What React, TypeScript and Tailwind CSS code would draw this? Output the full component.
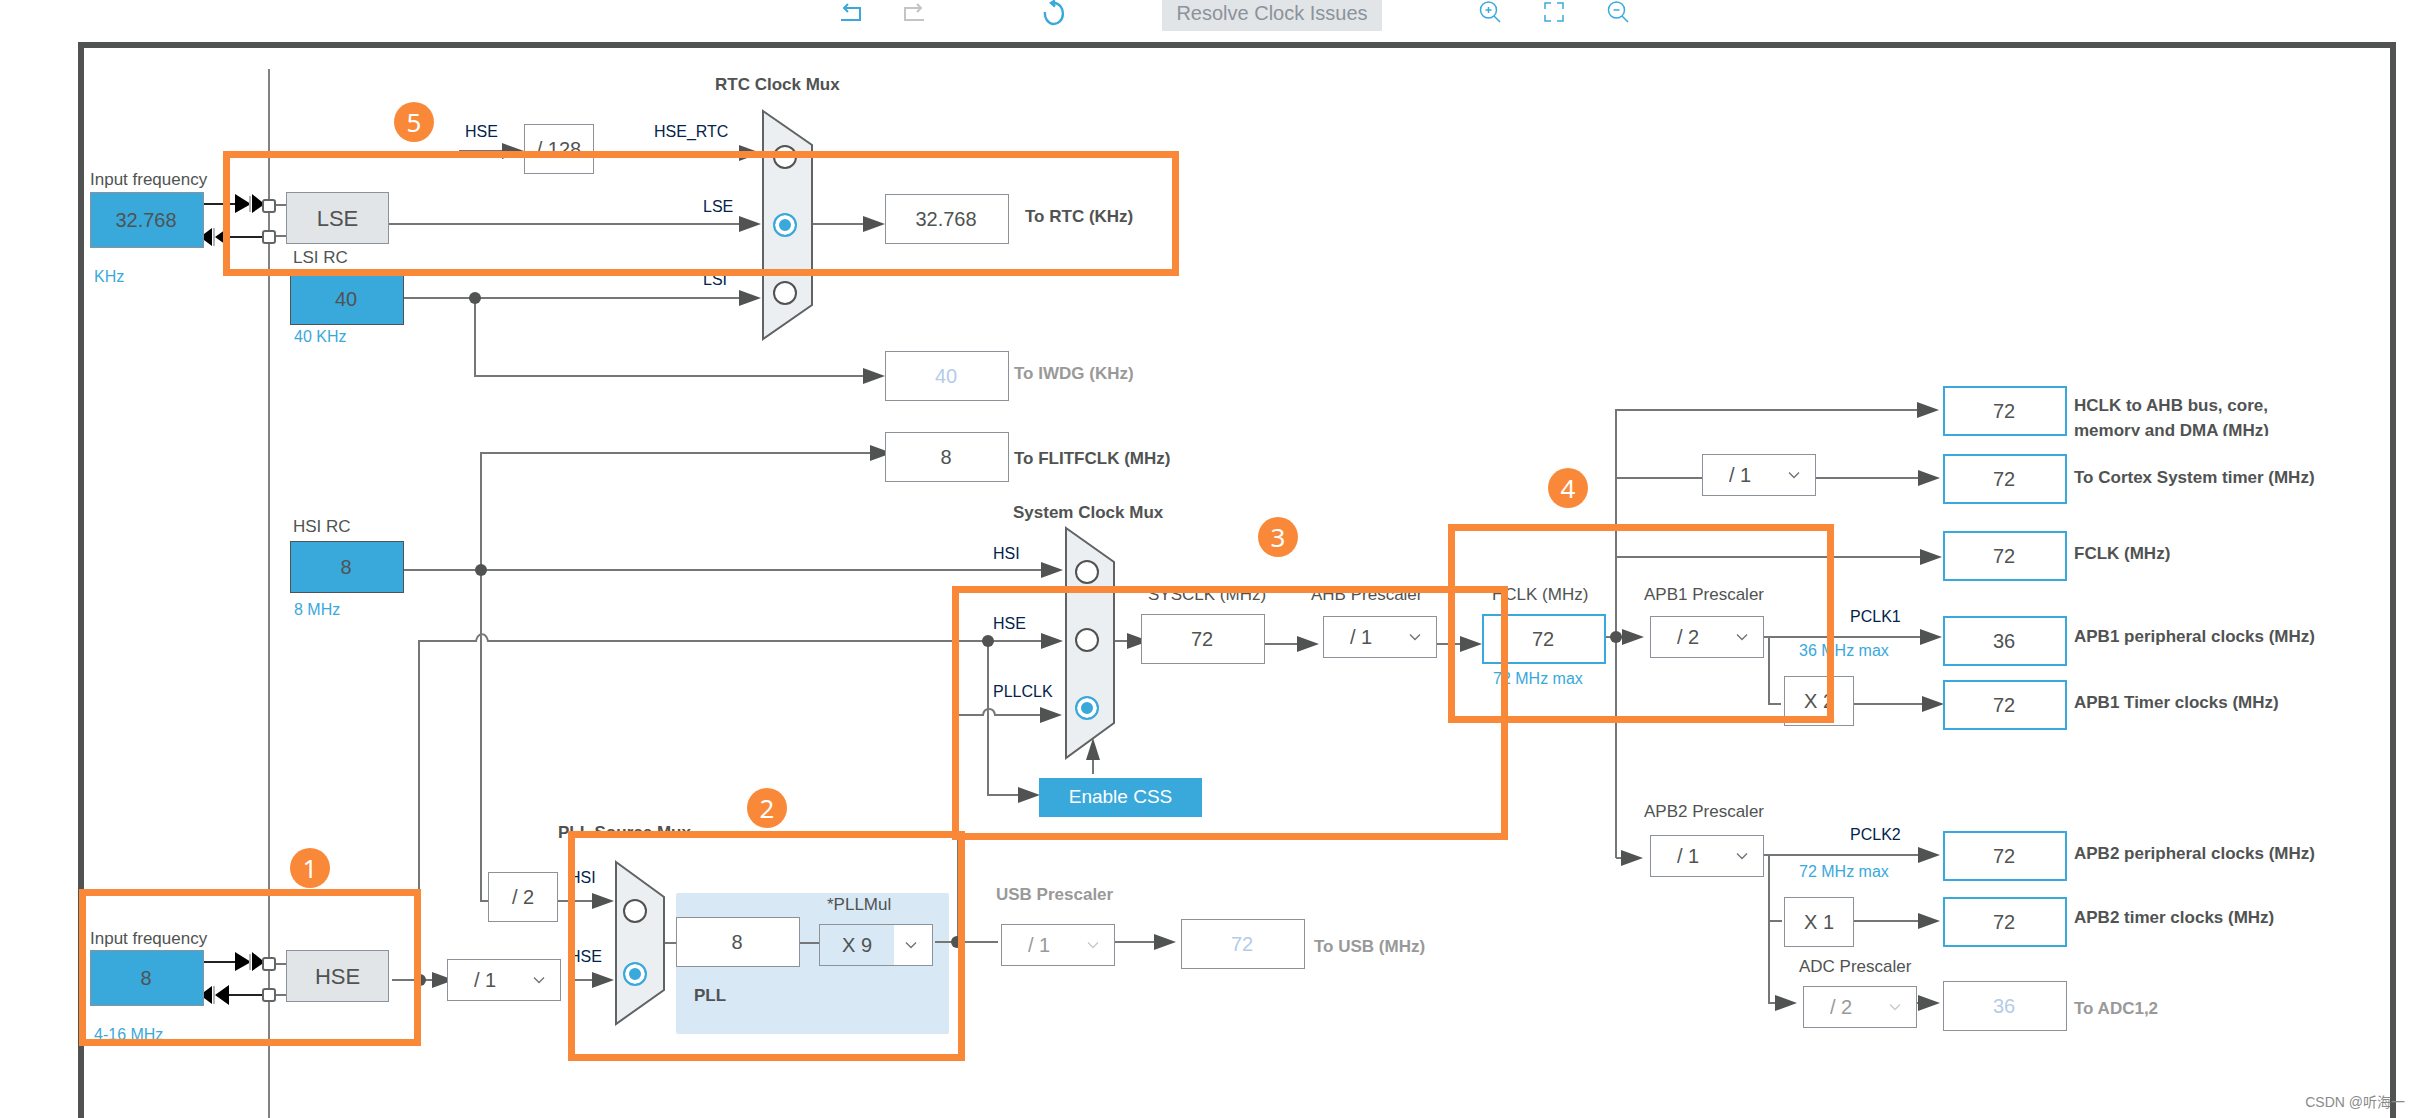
import React from 'react';
import clsx from 'clsx';

// Everything on the canvas is placed in diagram units, measured from the page's top left corner.

type FieldProps = {
  id: string;
  value: string;
  at: string;
  label?: string;
  look?: 'plain' | 'bus' | 'off' | 'source' | 'crystal';
};

const fieldLooks = {
  plain: 'h-[50px] w-[124px] border border-[#8c9299] bg-white text-[#505352]',
  bus: 'h-[50px] w-[124px] border-2 border-[#39a9dc] bg-white text-[#505352]',
  off: 'h-[50px] w-[124px] border border-[#8c9299] bg-white text-[#b4cce8]',
  source: 'h-[52px] w-[114px] border border-[#505352] bg-[#39a9dc] text-[#505352]',
  crystal: 'h-[56px] w-[114px] border border-[#8c9299] bg-[#39a9dc] text-[#505352]',
};

function Field({ id, value, at, label, look = 'plain' }: FieldProps) {
  return (
    <input
      id={id}
      type="text"
      defaultValue={value}
      aria-label={label}
      disabled={look === 'off'}
      className={clsx('absolute py-0 pr-0.5 pl-0 text-center text-xl outline-none', fieldLooks[look], at)}
    />
  );
}

type PrescalerProps = {
  id: string;
  at: string;
  options: string[];
  value: string;
  label?: string;
  disabled?: boolean;
  highlight?: boolean;
};

function Prescaler({ id, at, options, value, label, disabled, highlight }: PrescalerProps) {
  return (
    <div className={clsx('absolute h-[42px] w-[114px] border border-[#8c9299] bg-white', at)}>
      <select
        id={id}
        defaultValue={value}
        aria-label={label}
        disabled={disabled}
        className={clsx(
          'h-full appearance-none text-xl outline-none disabled:opacity-100',
          highlight ? 'w-[74px] bg-[#d9e8f5] pl-[22px]' : 'w-full pl-[26px]',
          disabled ? 'text-[#999999]' : 'text-[#505352]'
        )}
      >
        {options.map((o) => (
          <option key={o}>{o}</option>
        ))}
      </select>
      <svg
        viewBox="0 0 12 8"
        className={clsx(
          'pointer-events-none absolute top-4 right-[15px] h-2 w-3 fill-none',
          disabled ? 'stroke-[#c9c9c9]' : 'stroke-[#6f7272]'
        )}
      >
        <path d="M1 1.5 L6 6.5 L11 1.5" strokeWidth="1.3" />
      </svg>
    </div>
  );
}

function Factor({ at, children }: { at: string; children: React.ReactNode }) {
  return (
    <div className={clsx('absolute flex h-[50px] w-[70px] items-center justify-center border border-[#8c9299] bg-white text-xl', at)}>
      {children}
    </div>
  );
}

function Oscillator({ at, children }: { at: string; children: React.ReactNode }) {
  return (
    <div className={clsx('absolute flex h-[52px] w-[103px] items-center justify-center border border-[#8c9299] bg-[#e1e5e8] text-[22px]', at)}>
      {children}
    </div>
  );
}

const textLooks = {
  caption: 'text-[17px] text-[#505352]',
  title: 'text-[17px] font-bold text-[#505352]',
  muted: 'text-[17px] font-bold text-[#999999]',
  signal: 'text-base text-[#03234b]',
  range: 'text-base text-[#39a9dc]',
};

type TextProps = {
  at: string;
  look?: keyof typeof textLooks;
  htmlFor?: string;
  children: React.ReactNode;
};

function Text({ at, look = 'caption', htmlFor, children }: TextProps) {
  const cls = clsx('absolute leading-[22px] whitespace-nowrap', textLooks[look], at);
  return htmlFor ? (
    <label htmlFor={htmlFor} className={cls}>{children}</label>
  ) : (
    <span className={cls}>{children}</span>
  );
}

function MuxInput({ mux, name, at, checked }: { mux: string; name: string; at: string; checked?: boolean }) {
  return (
    <input
      type="radio"
      name={mux}
      aria-label={name}
      defaultChecked={checked}
      className={clsx(
        'absolute size-6 appearance-none rounded-full border-2 border-[#505352] bg-white',
        'checked:border-[#39a9dc] checked:bg-[#39a9dc] checked:shadow-[inset_0_0_0_4px_white]',
        at
      )}
    />
  );
}

function Marker({ at, children }: { at: string; children: React.ReactNode }) {
  return (
    <span
      className={clsx(
        'absolute flex size-10 items-center justify-center rounded-full bg-[#f98939] font-["Noto_Sans",sans-serif] text-[26px] text-white',
        at
      )}
    >
      {children}
    </span>
  );
}

function Highlight({ at }: { at: string }) {
  return <div className={clsx('pointer-events-none absolute border-7 border-[#f98939]', at)} />;
}

// tip x, line y
const arrowHeads: [number, number][] = [
  [524, 151], [761, 153], [761, 224], [761, 298], [885, 224], [885, 376], [892, 453],
  [1063, 570], [1063, 641], [1062, 715], [1040, 795], [1149, 641], [1319, 644], [1482, 644],
  [1644, 637], [1939, 410], [1940, 478], [1942, 557], [1942, 637], [1944, 704],
  [1643, 858], [1940, 855], [1940, 921], [1797, 1003], [1940, 1003],
  [614, 901], [614, 980], [454, 980], [1176, 942],
];

const wires = [
  'M459 151H510', 'M594 153H745', 'M389 224H745', 'M404 298H745', 'M475 298V376H870', 'M812 224H870',
  'M404 570H1045', 'M875 453H481V901H488', 'M419 980V641H476C478 632 486 632 488 641H1045',
  'M988 641V795H1025', 'M958 942V715H983C984 707 994 707 995 715H1045', 'M1114 641H1135',
  'M1265 644H1303', 'M1437 644H1467', 'M1606 637H1630', 'M1616 858V410H1922', 'M1616 478H1922',
  'M1616 557H1925', 'M1764 637H1925', 'M1769 637V704H1781', 'M1854 704H1926', 'M1616 858H1626',
  'M1764 855H1922', 'M1769 855V1003H1780', 'M1769 921H1782', 'M1854 921H1922', 'M1916 1003H1922',
  'M558 901H597', 'M572 980H597', 'M392 980H436', 'M665 943H820', 'M935 942H998', 'M1115 942H1158',
  'M1093 774V756', 'M276 205H286', 'M276 236H286', 'M276 964H286', 'M276 995H286',
];

const muxes = [
  'M763 111L812 145V305L763 339Z',
  'M1066 528L1114 562V723L1066 758Z',
  'M616 862L664 897V990L616 1024Z',
];

function CrystalPins({ y }: { y: number }) {
  return (
    <g transform={`translate(0 ${y})`}>
      <path d="M204 11H240M229 44H263" stroke="#222222" strokeWidth="2" />
      <path d="M235 1L251 11L235 20ZM252 1L262 9V13L252 20ZM204 41L212 35V53L204 47ZM215 44L229 34V54Z" fill="#000000" />
      <path d="M250 3V19M214 35V53" stroke="#b5b5b5" strokeWidth="2" />
      <rect x="263" y="7" width="12" height="12" rx="2" fill="white" stroke="#636666" strokeWidth="2" />
      <rect x="263" y="38" width="12" height="12" rx="2" fill="white" stroke="#636666" strokeWidth="2" />
    </g>
  );
}

function Wiring() {
  return (
    <svg className="absolute inset-0 h-full w-full">
      <rect x="676" y="893" width="273" height="141" rx="2" fill="#d9e8f5" />
      <line x1="269" y1="69" x2="269" y2="100%" stroke="#808383" strokeWidth="2" />
      <path d={wires.join('')} fill="none" stroke="#747776" strokeWidth="2" />
      {muxes.map((d) => (
        <path key={d} d={d} fill="#ebeff2" stroke="#5f6363" strokeWidth="2" />
      ))}
      {arrowHeads.map(([x, y]) => (
        <path key={`${x}-${y}`} d={`M${x} ${y}L${x - 22} ${y - 8}V${y + 8}Z`} fill="#505352" />
      ))}
      <path d="M1093 738L1100 760H1086Z" fill="#505352" />
      {[[475, 298], [481, 570], [988, 641], [1616, 637], [420, 980], [957, 942]].map(([x, y]) => (
        <circle key={`${x}-${y}`} cx={x} cy={y} r="6" fill="#505352" />
      ))}
      <CrystalPins y={193} />
      <CrystalPins y={951} />
    </svg>
  );
}

function ToolButton({ label, disabled, children }: { label: string; disabled?: boolean; children: React.ReactNode }) {
  return (
    <button
      type="button"
      aria-label={label}
      disabled={disabled}
      className={clsx('mt-0.5 size-5', disabled ? 'text-[#c4c4c4]' : 'text-[#39a9dc]')}
    >
      <svg viewBox="0 0 20 20" className="size-5 overflow-visible" fill="none" stroke="currentColor" strokeWidth="2">
        {children}
      </svg>
    </button>
  );
}

function Toolbar() {
  return (
    <header className="flex h-[42px] items-start justify-center pl-[50px]">
      <div className="flex gap-[43px]">
        <ToolButton label="Undo">
          <path d="M0 18H19V6H3M7 2L3 6L7 10" />
        </ToolButton>
        <ToolButton label="Redo" disabled>
          <path d="M20 18H1V6H17M13 2L17 6L13 10" />
        </ToolButton>
      </div>
      <div className="mx-[120px] flex">
        <ToolButton label="Refresh">
          <path strokeWidth="2.4" d="M1 10A9 10.5 0 1 0 10 1H8M11 -1.5L7 1L11 4.5" />
        </ToolButton>
      </div>
      <button type="button" disabled className="-ml-[22px] mr-[98px] h-[31px] w-[220px] bg-[#e1e5e8] pb-1.5 text-xl leading-6 text-[#8c9299]">
        Resolve Clock Issues
      </button>
      <div className="flex gap-11">
        <ToolButton label="Zoom in">
          <path strokeWidth="1.5" d="M16.5 8A8 8 0 1 1 .5 8A8 8 0 1 1 16.5 8ZM14 14L20 20M8.5 5V11M5.5 8H11.5" />
        </ToolButton>
        <ToolButton label="Fit to screen">
          <path strokeWidth="1.5" d="M1 7V1H7M13 1H19V7M19 13V19H13M7 19H1V13" />
        </ToolButton>
        <ToolButton label="Zoom out">
          <path strokeWidth="1.5" d="M16.5 8A8 8 0 1 1 .5 8A8 8 0 1 1 16.5 8ZM14 14L20 20M5.5 8H11.5" />
        </ToolButton>
      </div>
    </header>
  );
}

const dividers = ['/ 1', '/ 2', '/ 4', '/ 8', '/ 16'];

export default function App() {
  return (
    <div className='relative flex min-h-screen flex-col overflow-hidden bg-white font-["Liberation_Sans",Arial,sans-serif] text-[#505352]'>
      <Toolbar />

      <main className="mr-[23px] ml-[78px] flex-1 border-x-6 border-t-6 border-[#505352]">
        <Wiring />

        {/* RTC */}
        <Text at="left-[90px] top-[169px]" htmlFor="lse-freq">Input frequency</Text>
        <Field id="lse-freq" value="32.768" look="crystal" at="left-[90px] top-[192px]" />
        <Text at="left-[94px] top-[266px]" look="range">KHz</Text>
        <Oscillator at="left-[286px] top-[192px]">LSE</Oscillator>
        <Text at="left-[293px] top-[247px]" htmlFor="lsi">LSI RC</Text>
        <Field id="lsi" value="40" look="source" at="left-[290px] top-[273px]" />
        <Text at="left-[294px] top-[326px]" look="range">40 KHz</Text>
        <Text at="left-[465px] top-[121px]" look="signal">HSE</Text>
        <Factor at="left-[524px] top-[124px]">/ 128</Factor>
        <Text at="left-[715px] top-[74px]" look="title">RTC Clock Mux</Text>
        <Text at="left-[654px] top-[121px]" look="signal">HSE_RTC</Text>
        <Text at="left-[703px] top-[196px]" look="signal">LSE</Text>
        <Text at="left-[703px] top-[269px]" look="signal">LSI</Text>
        <MuxInput mux="rtc-mux" name="HSE_RTC" at="left-[773px] top-[145px]" />
        <MuxInput mux="rtc-mux" name="LSE" at="left-[773px] top-[213px]" checked />
        <MuxInput mux="rtc-mux" name="LSI" at="left-[773px] top-[281px]" />
        <Field id="rtc" value="32.768" at="left-[885px] top-[194px]" />
        <Text at="left-[1025px] top-[206px]" look="title" htmlFor="rtc">To RTC (KHz)</Text>
        <Field id="iwdg" value="40" look="off" at="left-[885px] top-[351px]" />
        <Text at="left-[1014px] top-[363px]" look="muted" htmlFor="iwdg">To IWDG (KHz)</Text>
        <Field id="flitf" value="8" at="left-[885px] top-[432px]" />
        <Text at="left-[1014px] top-[448px]" look="title" htmlFor="flitf">To FLITFCLK (MHz)</Text>

        {/* HSI and system clock mux */}
        <Text at="left-[293px] top-[516px]" htmlFor="hsi">HSI RC</Text>
        <Field id="hsi" value="8" look="source" at="left-[290px] top-[541px]" />
        <Text at="left-[294px] top-[599px]" look="range">8 MHz</Text>
        <Text at="left-[1013px] top-[502px]" look="title">System Clock Mux</Text>
        <Text at="left-[993px] top-[543px]" look="signal">HSI</Text>
        <Text at="left-[993px] top-[613px]" look="signal">HSE</Text>
        <Text at="left-[993px] top-[681px]" look="signal">PLLCLK</Text>
        <MuxInput mux="sys-mux" name="HSI" at="left-[1075px] top-[560px]" />
        <MuxInput mux="sys-mux" name="HSE" at="left-[1075px] top-[628px]" />
        <MuxInput mux="sys-mux" name="PLLCLK" at="left-[1075px] top-[696px]" checked />
        <button type="button" className="absolute top-[778px] left-[1039px] h-[39px] w-[163px] bg-[#39a9dc] text-[19px] text-white">
          Enable CSS
        </button>
        <Text at="left-[1148px] top-[584px]" htmlFor="sysclk">SYSCLK (MHz)</Text>
        <Field id="sysclk" value="72" at="left-[1141px] top-[614px]" />
        <Text at="left-[1311px] top-[584px]" htmlFor="ahb">AHB Prescaler</Text>
        <Prescaler id="ahb" options={dividers} value="/ 1" at="left-[1323px] top-[616px]" />
        <Text at="left-[1492px] top-[584px]" htmlFor="hclk">HCLK (MHz)</Text>
        <Field id="hclk" value="72" look="bus" at="left-[1482px] top-[614px]" />
        <Text at="left-[1493px] top-[668px]" look="range">72 MHz max</Text>

        {/* HSE and PLL */}
        <Text at="left-[90px] top-[928px]" htmlFor="hse-freq">Input frequency</Text>
        <Field id="hse-freq" value="8" look="crystal" at="left-[90px] top-[950px]" />
        <Text at="left-[94px] top-[1024px]" look="range">4-16 MHz</Text>
        <Oscillator at="left-[286px] top-[950px]">HSE</Oscillator>
        <Prescaler id="hse-div" label="HSE divider" options={dividers} value="/ 1" at="left-[447px] top-[959px]" />
        <Factor at="left-[488px] top-[872px]">/ 2</Factor>
        <Text at="left-[558px] top-[822px]" look="title">PLL Source Mux</Text>
        <Text at="left-[569px] top-[867px]" look="signal">HSI</Text>
        <Text at="left-[569px] top-[946px]" look="signal">HSE</Text>
        <MuxInput mux="pll-mux" name="HSI" at="left-[623px] top-[899px]" />
        <MuxInput mux="pll-mux" name="HSE" at="left-[623px] top-[962px]" checked />
        <Field id="pll-in" value="8" label="PLL input" at="left-[676px] top-[917px]" />
        <Text at="left-[827px] top-[894px]" htmlFor="pll-mul">*PLLMul</Text>
        <Prescaler id="pll-mul" options={['X 2', 'X 4', 'X 9', 'X 16']} value="X 9" highlight at="left-[819px] top-[924px]" />
        <Text at="left-[694px] top-[985px]" look="title">PLL</Text>
        <Text at="left-[996px] top-[884px]" look="muted" htmlFor="usb-div">USB Prescaler</Text>
        <Prescaler id="usb-div" label="USB prescaler" options={dividers} value="/ 1" disabled at="left-[1001px] top-[924px]" />
        <Field id="usb" value="72" look="off" at="left-[1181px] top-[919px]" />
        <Text at="left-[1314px] top-[936px]" look="muted" htmlFor="usb">To USB (MHz)</Text>

        {/* AHB outputs */}
        <Field id="ahb-out" value="72" look="bus" at="left-[1943px] top-[386px]" />
        <label
          htmlFor="ahb-out"
          className="absolute top-[393px] left-[2074px] h-[43px] w-[230px] overflow-hidden text-[17px] leading-[25px] font-bold"
        >
          HCLK to AHB bus, core, memory and DMA (MHz)
        </label>
        <Prescaler id="cortex-div" label="Cortex prescaler" options={dividers} value="/ 1" at="left-[1702px] top-[454px]" />
        <Field id="cortex" value="72" look="bus" at="left-[1943px] top-[454px]" />
        <Text at="left-[2074px] top-[467px]" look="title" htmlFor="cortex">To Cortex System timer (MHz)</Text>
        <Field id="fclk" value="72" look="bus" at="left-[1943px] top-[531px]" />
        <Text at="left-[2074px] top-[543px]" look="title" htmlFor="fclk">FCLK (MHz)</Text>

        {/* APB1 */}
        <Text at="left-[1644px] top-[584px]" htmlFor="apb1-div">APB1 Prescaler</Text>
        <Prescaler id="apb1-div" options={dividers} value="/ 2" at="left-[1650px] top-[616px]" />
        <Text at="left-[1850px] top-[606px]" look="signal">PCLK1</Text>
        <Text at="left-[1799px] top-[640px]" look="range">36 MHz max</Text>
        <Factor at="left-[1784px] top-[676px]">X 2</Factor>
        <Field id="apb1" value="36" look="bus" at="left-[1943px] top-[616px]" />
        <Text at="left-[2074px] top-[626px]" look="title" htmlFor="apb1">APB1 peripheral clocks (MHz)</Text>
        <Field id="apb1-tim" value="72" look="bus" at="left-[1943px] top-[680px]" />
        <Text at="left-[2074px] top-[692px]" look="title" htmlFor="apb1-tim">APB1 Timer clocks (MHz)</Text>

        {/* APB2 and ADC */}
        <Text at="left-[1644px] top-[801px]" htmlFor="apb2-div">APB2 Prescaler</Text>
        <Prescaler id="apb2-div" options={dividers} value="/ 1" at="left-[1650px] top-[835px]" />
        <Text at="left-[1850px] top-[824px]" look="signal">PCLK2</Text>
        <Text at="left-[1799px] top-[861px]" look="range">72 MHz max</Text>
        <Factor at="left-[1784px] top-[897px]">X 1</Factor>
        <Field id="apb2" value="72" look="bus" at="left-[1943px] top-[831px]" />
        <Text at="left-[2074px] top-[843px]" look="title" htmlFor="apb2">APB2 peripheral clocks (MHz)</Text>
        <Field id="apb2-tim" value="72" look="bus" at="left-[1943px] top-[897px]" />
        <Text at="left-[2074px] top-[907px]" look="title" htmlFor="apb2-tim">APB2 timer clocks (MHz)</Text>
        <Text at="left-[1799px] top-[956px]" htmlFor="adc-div">ADC Prescaler</Text>
        <Prescaler id="adc-div" options={dividers} value="/ 2" disabled at="left-[1803px] top-[986px]" />
        <Field id="adc" value="36" look="off" at="left-[1943px] top-[981px]" />
        <Text at="left-[2074px] top-[998px]" look="muted" htmlFor="adc">To ADC1,2</Text>

        {/* Walkthrough steps */}
        <Highlight at="top-[889px] left-[79px] h-[157px] w-[342px]" />
        <Highlight at="top-[831px] left-[568px] h-[230px] w-[397px]" />
        <Highlight at="top-[586px] left-[952px] h-[254px] w-[556px]" />
        <Highlight at="top-[524px] left-[1448px] h-[199px] w-[386px]" />
        <Highlight at="top-[151px] left-[223px] h-[125px] w-[956px]" />
        <Marker at="top-[848px] left-[290px]">1</Marker>
        <Marker at="top-[788px] left-[747px]">2</Marker>
        <Marker at="top-[517px] left-[1258px]">3</Marker>
        <Marker at="top-[468px] left-[1548px]">4</Marker>
        <Marker at="top-[102px] left-[394px]">5</Marker>
      </main>

      <span className='absolute right-3.5 bottom-1.5 font-["Liberation_Sans","Noto_Sans_CJK_SC",sans-serif] text-sm leading-5 text-[#8a8a8a]'>
        CSDN @听海一
      </span>
    </div>
  );
}
